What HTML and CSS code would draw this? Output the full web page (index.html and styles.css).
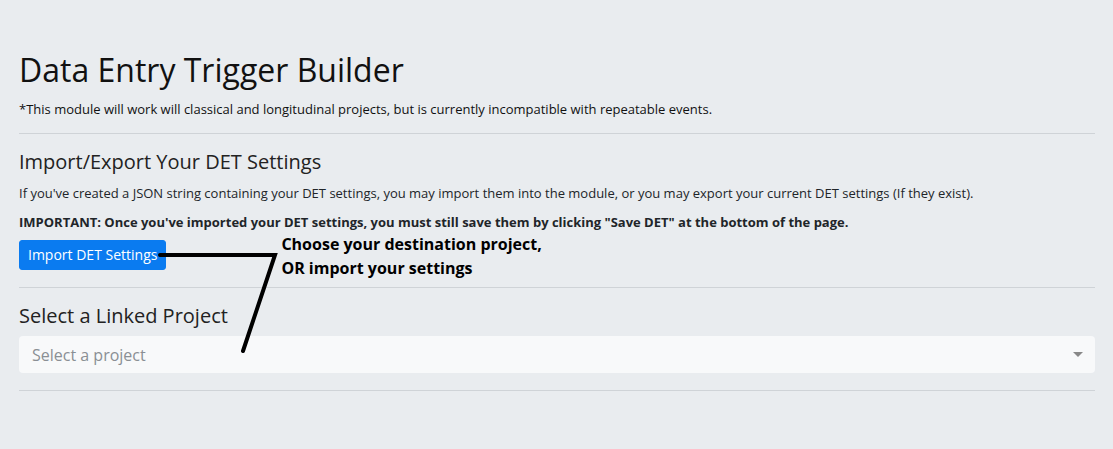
FILE: index.html
```html
<!DOCTYPE html>
<html>
<head>
<meta charset="utf-8">
<link rel="stylesheet" href="styles.css">
</head>
<body>
<div class="page">
  <h1 class="title">Data Entry Trigger Builder</h1>
  <p class="note">*This module will work will classical and longitudinal projects, but is currently incompatible with repeatable events.</p>
  <hr class="rule">
  <h4 class="section">Import/Export Your DET Settings</h4>
  <p class="text">If you've created a JSON string containing your DET settings, you may import them into the module, or you may export your current DET settings (If they exist).</p>
  <p class="text strong">IMPORTANT: Once you've imported your DET settings, you must still save them by clicking "Save DET" at the bottom of the page.</p>
  <div class="actions">
    <button class="btn">Import DET Settings</button>
    <div class="callout">Choose your destination project,<br>OR import your settings</div>
  </div>
  <hr class="rule">
  <h4 class="section tight">Select a Linked Project</h4>
  <div class="select">
    <span class="placeholder">Select a project</span>
    <span class="caret"></span>
  </div>
  <hr class="rule">
  <svg class="pointer" width="1113" height="449" viewBox="0 0 1113 449">
    <polyline points="160,255 275,255 243,351" fill="none" stroke="#000" stroke-width="4" stroke-linejoin="miter" stroke-linecap="round"/>
  </svg>
</div>
</body>
</html>
```

FILE: styles.css
```css
* { box-sizing: border-box; }
html, body { margin: 0; padding: 0; }
body {
  background: #e9ecef;
  font-family: "Open Sans", "Liberation Sans", sans-serif;
  color: #212529;
  width: 1113px;
  height: 449px;
  overflow: hidden;
}
.page {
  position: relative;
  padding: 51px 18px 0 19px;
  height: 449px;
}
.title {
  font-size: 32px;
  font-weight: 400;
  line-height: 38px;
  margin: 0 0 11px 0;
  color: #111;
}
.note {
  font-size: 13px;
  line-height: 18px;
  margin: 0 0 15px 0;
  color: #111;
}
.rule {
  border: 0;
  border-top: 1px solid #cfd3d7;
  margin: 0;
}
.section {
  font-size: 20px;
  font-weight: 400;
  line-height: 24px;
  margin: 16px 0 10px 0;
  color: #222;
}
.section.tight { margin-bottom: 8px; }
.text {
  font-size: 13px;
  line-height: 18px;
  margin: 0 0 11px 0;
  color: #212529;
}
.text.strong { font-weight: 700; margin-bottom: 9px; }
.actions {
  display: flex;
  align-items: flex-start;
  gap: 115px;
  padding-bottom: 7px;
}
.btn {
  font-family: "Open Sans", "Liberation Sans", sans-serif;
  font-size: 14px;
  line-height: 20px;
  color: #fff;
  background: #0a7bf0;
  border: 1px solid #0a7bf0;
  border-radius: 3px;
  padding: 4px 8px;
  height: 30px;
}
.callout {
  font-size: 16px;
  font-weight: 700;
  line-height: 24px;
  color: #000;
  margin-top: -8px;
}
.select {
  display: flex;
  align-items: center;
  justify-content: space-between;
  height: 37px;
  background: #f8f9fa;
  border-radius: 4px;
  padding: 0 12px 0 13px;
  margin-bottom: 17px;
}
.placeholder {
  font-size: 16px;
  color: #8a8f94;
}
.caret {
  width: 0;
  height: 0;
  border-left: 5px solid transparent;
  border-right: 5px solid transparent;
  border-top: 5px solid #888;
}
.pointer {
  position: absolute;
  left: 0;
  top: 0;
  pointer-events: none;
}
```
